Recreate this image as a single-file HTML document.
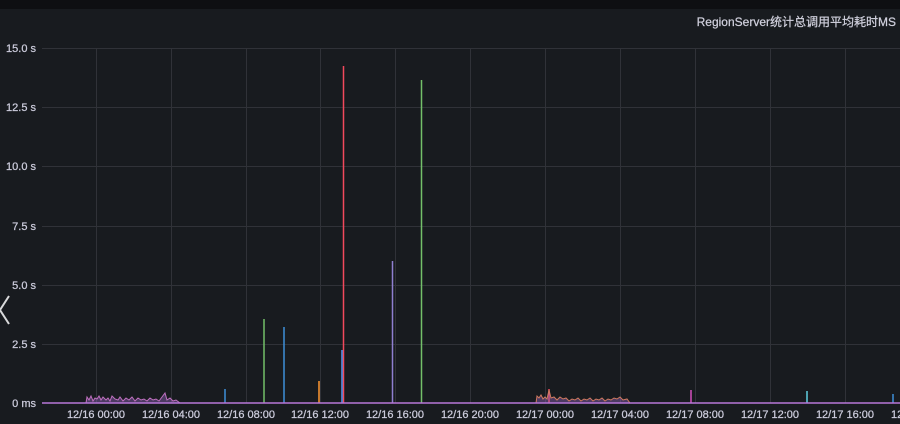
<!DOCTYPE html>
<html><head><meta charset="utf-8"><style>
html,body{margin:0;padding:0;width:900px;height:424px;overflow:hidden;background:#181b1f;}
svg{display:block}
text{font-family:"Liberation Sans","Noto Sans CJK SC",sans-serif;fill:#ccccdc;}
</style></head><body>
<svg width="900" height="424" viewBox="0 0 900 424" xmlns="http://www.w3.org/2000/svg">
<rect x="0" y="0" width="900" height="9" fill="#0e0f12"/>
<rect x="0" y="9" width="900" height="415" fill="#181b1f"/>
<text x="896" y="26" font-size="12" text-anchor="end" fill="#e0e0e8" stroke="#e0e0e8" stroke-width="0.2">RegionServer统计总调用平均耗时MS</text>
<g stroke="#303238" stroke-width="1">
<line x1="42" y1="48.5" x2="900" y2="48.5"/>
<line x1="42" y1="107.5" x2="900" y2="107.5"/>
<line x1="42" y1="166.5" x2="900" y2="166.5"/>
<line x1="42" y1="226.5" x2="900" y2="226.5"/>
<line x1="42" y1="285.5" x2="900" y2="285.5"/>
<line x1="42" y1="344.5" x2="900" y2="344.5"/>
<line x1="96.5" y1="48" x2="96.5" y2="403"/>
<line x1="171.5" y1="48" x2="171.5" y2="403"/>
<line x1="246.5" y1="48" x2="246.5" y2="403"/>
<line x1="320.5" y1="48" x2="320.5" y2="403"/>
<line x1="395.5" y1="48" x2="395.5" y2="403"/>
<line x1="470.5" y1="48" x2="470.5" y2="403"/>
<line x1="545.5" y1="48" x2="545.5" y2="403"/>
<line x1="620.5" y1="48" x2="620.5" y2="403"/>
<line x1="695.5" y1="48" x2="695.5" y2="403"/>
<line x1="770.5" y1="48" x2="770.5" y2="403"/>
<line x1="845.5" y1="48" x2="845.5" y2="403"/>
</g>
<g font-size="11" text-anchor="end" stroke="#ccccdc" stroke-width="0.25">
<text x="36" y="52">15.0 s</text>
<text x="36" y="111">12.5 s</text>
<text x="36" y="170">10.0 s</text>
<text x="36" y="230">7.5 s</text>
<text x="36" y="289">5.0 s</text>
<text x="36" y="348">2.5 s</text>
<text x="36" y="407">0 ms</text>
</g>
<g font-size="11" text-anchor="middle" stroke="#ccccdc" stroke-width="0.25">
<text x="96" y="418">12/16 00:00</text>
<text x="171" y="418">12/16 04:00</text>
<text x="246" y="418">12/16 08:00</text>
<text x="320" y="418">12/16 12:00</text>
<text x="395" y="418">12/16 16:00</text>
<text x="470" y="418">12/16 20:00</text>
<text x="545" y="418">12/17 00:00</text>
<text x="620" y="418">12/17 04:00</text>
<text x="695" y="418">12/17 08:00</text>
<text x="770" y="418">12/17 12:00</text>
<text x="845" y="418">12/17 16:00</text>
<text x="891" y="418" text-anchor="start">12</text>
</g>
<g stroke-width="1.5">
<line x1="343.5" y1="66" x2="343.5" y2="403" stroke="#f2495c"/>
<line x1="421.5" y1="80" x2="421.5" y2="403" stroke="#73bf69"/>
<line x1="392.5" y1="261" x2="392.5" y2="403" stroke="#8f7fd0"/>
<line x1="264" y1="319" x2="264" y2="403" stroke="#73bf69"/>
<line x1="284" y1="327" x2="284" y2="403" stroke="#3d8fd9"/>
<line x1="319" y1="381" x2="319" y2="403" stroke="#ff9830"/>
<line x1="342" y1="350" x2="342" y2="403" stroke="#5794f2"/>
<line x1="225" y1="389" x2="225" y2="403" stroke="#3d8fd9"/>
<line x1="691" y1="390" x2="691" y2="403" stroke="#d44fbf"/>
<line x1="807" y1="391" x2="807" y2="403" stroke="#5fd0e0"/>
<line x1="893" y1="394" x2="893" y2="403" stroke="#3d8fd9"/>
<line x1="549" y1="389" x2="549" y2="403" stroke="#f2495c"/>
</g>
<polyline fill="#9a68c8" fill-opacity="0.4" stroke="#c070c0" stroke-width="1" points="86,403 87,397 89,400 91,396 93,401 95,398 97,399 99,396 101,400 103,397 106,400 108,398 110,401 112,396 115,399 118,400 120,397 123,401 126,398 129,400 132,397 135,401 138,398 141,400 144,399 147,401 150,398 153,400 156,399 159,401 162,397 165,393 167,400 170,398 173,401 176,400 180,403"/>
<polyline fill="#9a68c8" fill-opacity="0.4" stroke="#d07a60" stroke-width="1" points="536,403 537,396 539,398 541,395 543,399 545,397 547,399 549,390 551,398 554,397 557,400 560,397 563,399 566,398 569,401 572,399 575,400 578,398 581,401 584,399 587,400 590,398 593,401 596,399 599,400 602,398 605,401 608,399 611,400 614,398 617,399 620,397 623,400 627,399 630,403"/>
<line x1="42" y1="403" x2="900" y2="403" stroke="#b877d9" stroke-width="1.5"/>
<polyline points="9,296 0,310 9,324" fill="none" stroke="#d8d9da" stroke-width="2"/>
</svg>
</body></html>
